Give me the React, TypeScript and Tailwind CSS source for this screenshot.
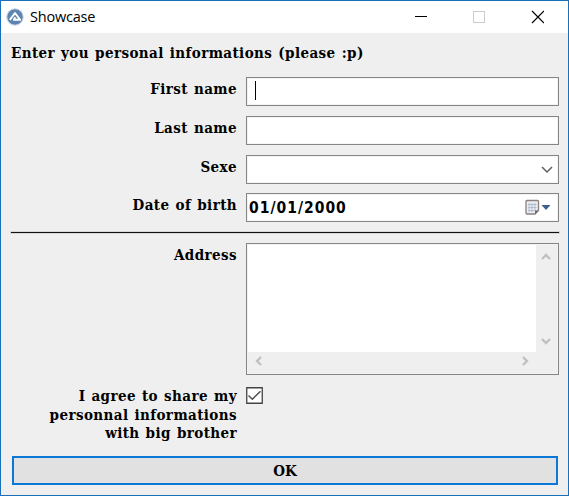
import type { ReactNode } from 'react';

const field = 'box-border w-[313px] border border-[#858585] bg-white outline outline-1 -outline-offset-2 outline-[#f4f4f4]';

function Row({ label, top, children }: { label: ReactNode; top: string; children: ReactNode }) {
  return (
    <div className={`flex ${top}`}>
      <div className="mr-[9px] w-[225px] shrink-0 pt-[3px] text-right leading-[18.7px]">{label}</div>
      {children}
    </div>
  );
}

function Arrow({ turn }: { turn: string }) {
  return (
    <svg className={turn} width="10" height="10" viewBox="0 0 10 10" fill="none" stroke="#bfbfbf" strokeWidth="2.3">
      <path d="M1 7 5 3l4 4" />
    </svg>
  );
}

export default function App() {
  return (
    <div className="flex h-[496px] w-[569px] flex-col border border-[#1a70b8] bg-[#efefef] text-black">
      <header className="flex h-8 shrink-0 items-center bg-white">
        <svg className="ml-[5px]" width="18" height="18" viewBox="0 0 18 18">
          <circle cx="9" cy="9" r="8.2" fill="#5e85b0" stroke="#c7d3e2" strokeWidth="1" />
          <path d="M3.800 11.800 9 5l5.200 6.800H7.800L9.300 9.300" fill="none" stroke="#fff" strokeWidth="1.9" strokeLinejoin="round" />
        </svg>
        <span className="ml-[6px] font-['Open_Sans','Noto_Sans',sans-serif] text-[14.5px] leading-5 tracking-[-0.2px]">Showcase</span>
        <svg className="ml-auto mr-[24px]" width="130" height="14" viewBox="0 0 130 14" fill="none" shapeRendering="crispEdges">
          <path d="M1 6.5h12" stroke="#000" />
          <path d="M59.5 1.5h11v11h-11z" stroke="#ccc" />
          <path d="m118 1 12 12M130 1l-12 12" stroke="#000" shapeRendering="auto" strokeWidth="1.2" />
        </svg>
      </header>
      <main className="flex flex-col pl-[11px] font-['DejaVu_Serif_Condensed','DejaVu_Serif',serif] text-[15px] font-bold tracking-[0.4px] [word-spacing:1px]">
        <h1 className="-ml-px mt-[10px] h-[20px] leading-[20px] whitespace-nowrap">Enter you personal informations (please :p)</h1>
        <Row label="First name" top="mt-[14px]">
          <div className={`${field} h-[29px]`}>
            <div className="ml-2 mt-[3px] h-[19px] w-px bg-black" />
          </div>
        </Row>
        <Row label="Last name" top="mt-[10px]">
          <div className={`${field} h-[29px]`} />
        </Row>
        <Row label="Sexe" top="mt-[10px]">
          <div className={`${field} flex h-[29px] items-center justify-end pr-[5px]`}>
            <svg width="12" height="8" viewBox="0 0 12 8" fill="none" stroke="#606060" strokeWidth="1.5">
              <path d="m1 1 5 5 5-5" />
            </svg>
          </div>
        </Row>
        <Row label="Date of birth" top="mt-[9px]">
          <div className={`${field} flex h-[29px] items-center pl-[2px] pr-[6px]`}>
            <span className="font-['DejaVu_Sans_Condensed','DejaVu_Sans',sans-serif] text-[15.5px] font-bold leading-6 tracking-[1px]">01/01/2000</span>
            <svg className="ml-auto" width="27" height="18" viewBox="0 0 27 18">
              <path d="M2 1.5h10.5q1 0 1 1v9l-3.500 3.500H2q-1 0-1-1V2.500q0-1 1-1z" fill="#e9edf4" stroke="#8c7f7c" strokeWidth="1.3" />
              <path d="M3.500 5.500h8m-8 3h8m-8 3h6M4 4v9m3-9v9m3-9v8" stroke="#b3bccb" fill="none" />
              <path d="m13.500 11.500-3.500 3.500v-3.500z" fill="#6b5f60" />
              <path d="M16.500 6h9L21 11z" fill="#3f5d91" />
            </svg>
          </div>
        </Row>
        <div className="-ml-px mt-[10px] h-px w-[548px] bg-[#111] outline outline-1 outline-black/10" />
        <Row label="Address" top="mt-[10px]">
          <div className={`${field} flex h-[132px] flex-col p-px`}>
            <div className="flex h-[107px]">
              <div className="flex-1 bg-white" />
              <div className="flex w-[21px] flex-col items-center justify-between bg-[#efefef] pr-[2px] pt-[7px] pb-[6px]">
                <Arrow turn="" />
                <Arrow turn="rotate-180" />
              </div>
            </div>
            <div className="flex flex-1 items-center justify-between bg-[#efefef] pb-[3px] pl-[6px] pr-[27px]">
              <Arrow turn="-rotate-90" />
              <Arrow turn="rotate-90" />
            </div>
          </div>
        </Row>
        <Row label={<>I agree to share my<br />personnal informations<br />with big brother</>} top="mt-[9px]">
          <svg className="mt-[3px]" width="17" height="17" viewBox="0 0 17 17" fill="none">
            <path d="M.75.75h15.500v15.500H.75z" fill="#fff" stroke="#444" strokeWidth="1.3" />
            <path d="m2.500 8.500 3.800 3.700 8.200-8" stroke="#505050" strokeWidth="1.500" />
          </svg>
        </Row>
        <button className="mt-[13px] h-[29px] w-[546px] border-2 border-[#0b78d5] bg-[#e1e1e1] leading-[22px] tracking-normal">OK</button>
      </main>
    </div>
  );
}
